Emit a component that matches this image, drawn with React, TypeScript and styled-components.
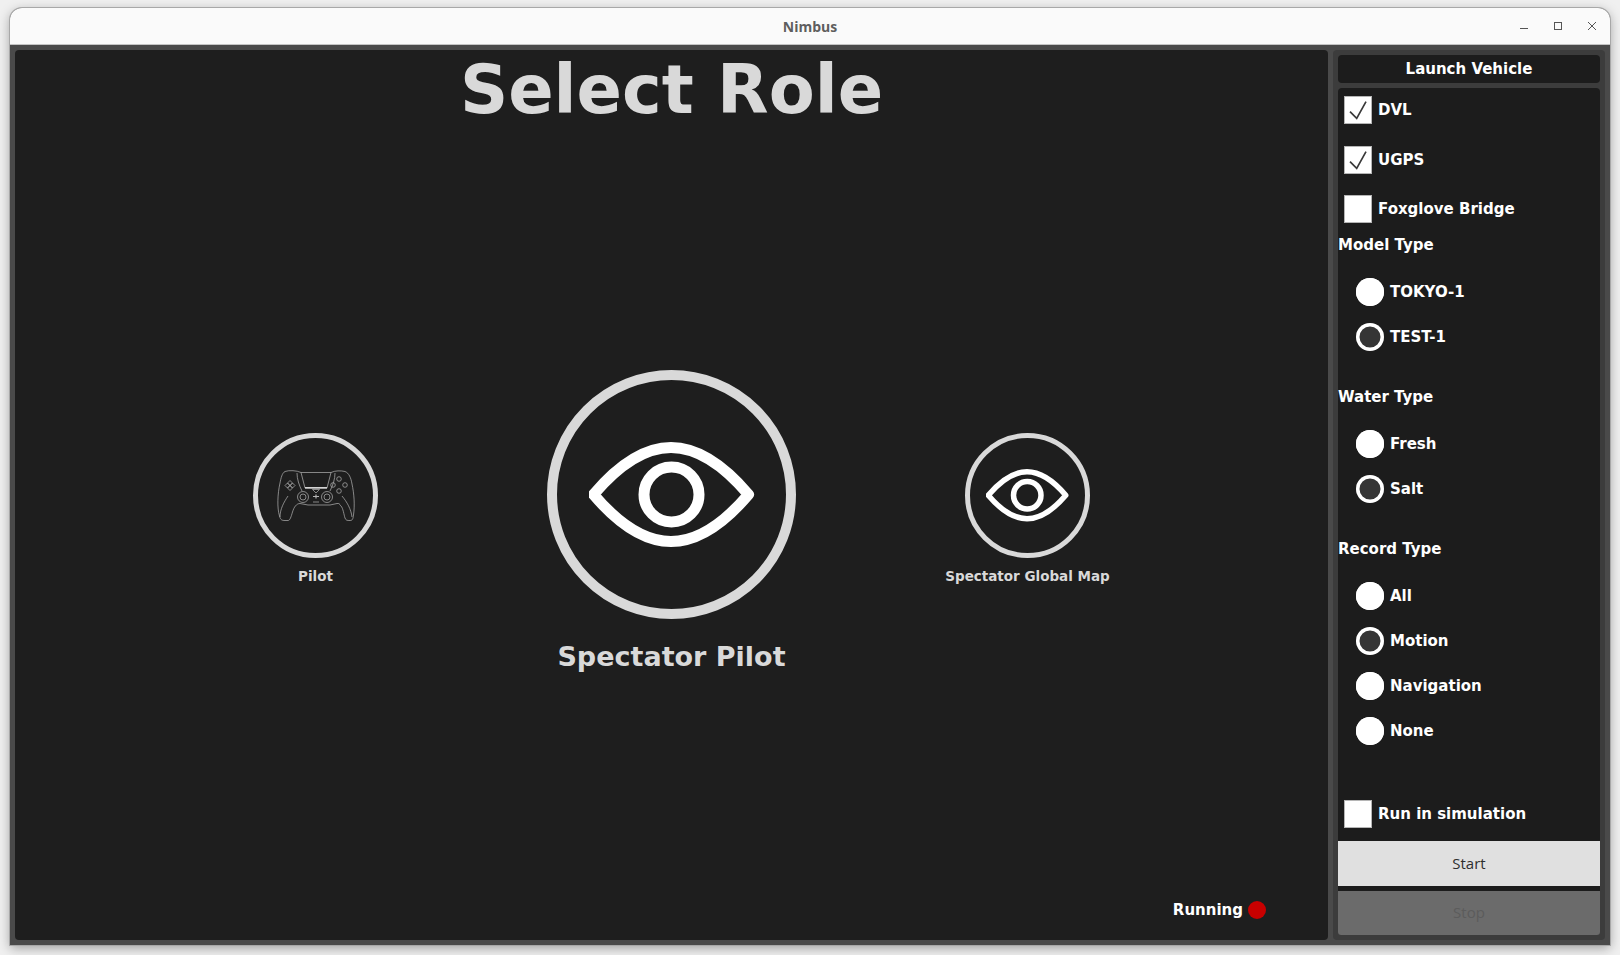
import styled, { createGlobalStyle } from "styled-components";

const GlobalStyle = createGlobalStyle`
  html, body {
    margin: 0;
    padding: 0;
    background: #ededed;
  }
  * {
    box-sizing: border-box;
  }
`;

const Desktop = styled.div`
  width: 1620px;
  height: 955px;
  padding: 8px 10px 10px;
  background: #f0f0f0;
  overflow: hidden;
`;

const Window = styled.div`
  height: 937px;
  display: flex;
  flex-direction: column;
  border-radius: 12px 12px 0 0;
  overflow: hidden;
  background: #4a4a4a;
  box-shadow: 0 0 0 1px #a8a8a8, 0 3px 12px rgba(0, 0, 0, 0.35);
`;

const TitleBar = styled.header`
  position: relative;
  height: 37px;
  flex: none;
  display: flex;
  align-items: center;
  justify-content: center;
  background: #fafafa;
  border-bottom: 1px solid #c4c4c4;
  color: #5e5e5e;
  font: 700 14px "Open Sans", "Noto Sans", sans-serif;
`;

const WindowButtons = styled.div`
  position: absolute;
  top: 0;
  right: 1px;
  height: 36px;
  display: flex;
  align-items: center;
  color: #555;
`;

const WindowButton = styled.span`
  width: 34px;
  height: 36px;
  display: flex;
  align-items: center;
  justify-content: center;
`;

const Body = styled.div`
  flex: 1;
  min-height: 0;
  display: flex;
  gap: 5px;
  padding: 5px;
`;

const MainPanel = styled.main`
  width: 1313px;
  flex: none;
  display: flex;
  flex-direction: column;
  background: #1e1e1e;
  border-radius: 4px;
  color: #d9d9d9;
  font-family: "DejaVu Sans", sans-serif;
`;

const Heading = styled.h1`
  margin: 0;
  height: 80px;
  line-height: 80px;
  text-align: center;
  font-size: 67px;
  font-weight: 700;
`;

const Roles = styled.div`
  flex: 1;
  display: flex;
  justify-content: center;
  padding-top: 240px;
`;

const RoleColumn = styled.div<{ $big?: boolean }>`
  width: 356px;
  display: flex;
  flex-direction: column;
  align-items: center;
  margin-top: ${(p) => (p.$big ? 0 : 63)}px;
`;

const RoleCircle = styled.div<{ $big?: boolean }>`
  width: ${(p) => (p.$big ? 249 : 125)}px;
  height: ${(p) => (p.$big ? 249 : 125)}px;
  flex: none;
  display: flex;
  align-items: center;
  justify-content: center;
  border: ${(p) => (p.$big ? 10 : 5)}px solid #d9d9d9;
  border-radius: 50%;
`;

const RoleLabel = styled.div<{ $big?: boolean }>`
  margin-top: ${(p) => (p.$big ? 21 : 9)}px;
  font-size: ${(p) => (p.$big ? 27 : 13.5)}px;
  line-height: ${(p) => (p.$big ? 34 : 19)}px;
  font-weight: 700;
  white-space: nowrap;
`;

const StatusRow = styled.div`
  height: 40px;
  margin-bottom: 10px;
  padding-right: 62px;
  display: flex;
  align-items: center;
  justify-content: flex-end;
  gap: 5px;
  color: #fff;
  font-size: 15px;
  font-weight: 700;
`;

const StatusDot = styled.span`
  width: 18px;
  height: 18px;
  border-radius: 50%;
  background: #c80000;
`;

const SidePanel = styled.aside`
  flex: 1;
  display: flex;
  flex-direction: column;
  gap: 5px;
  padding: 5px;
  background: #3c3c3c;
  border-radius: 4px;
  color: #fff;
  font-family: "DejaVu Sans", sans-serif;
  font-size: 15px;
  font-weight: 700;
`;

const PanelHeader = styled.div`
  height: 28px;
  flex: none;
  display: flex;
  align-items: center;
  justify-content: center;
  background: #1c1c1c;
  border-radius: 4px;
`;

const Controls = styled.div`
  flex: 1;
  display: flex;
  flex-direction: column;
  background: #1c1c1c;
  border-radius: 4px;
`;

const Options = styled.div`
  flex: 1;
  display: flex;
  flex-direction: column;
`;

const CheckList = styled.div`
  display: flex;
  flex-direction: column;
  gap: 5.5px;
  margin-bottom: 2px;
`;

const CheckRow = styled.label`
  height: 44px;
  display: flex;
  align-items: center;
  gap: 6px;
  padding-left: 6px;
`;

const CheckBox = styled.span`
  width: 28px;
  height: 28px;
  flex: none;
  background: #fff;
  border: 1px solid #b5b5b5;
`;

const GroupTitle = styled.div`
  height: 24px;
  line-height: 24px;
`;

const RadioGroup = styled.section<{ $gap: number }>`
  margin-bottom: ${(p) => p.$gap}px;
`;

const RadioList = styled.div`
  padding-top: 12px;
`;

const RadioRow = styled.label`
  height: 45px;
  display: flex;
  align-items: center;
  gap: 6px;
  padding-left: 18px;
`;

const RadioMark = styled.span<{ $checked?: boolean }>`
  width: 28px;
  height: 28px;
  flex: none;
  border-radius: 50%;
  background: ${(p) => (p.$checked ? "#353535" : "#fff")};
  box-shadow: inset 0 0 0 3.5px #fff;
`;

const ActionButton = styled.button<{ $disabled?: boolean }>`
  height: 45px;
  flex: none;
  border: 0;
  padding: 0 0 2px;
  background: ${(p) => (p.$disabled ? "#6b6b6b" : "#e0e0e0")};
  color: ${(p) => (p.$disabled ? "#5c5c5c" : "#2e2e2e")};
  font: 400 15px "Open Sans", "Noto Sans", sans-serif;
`;

const StopButton = styled(ActionButton)`
  height: 44px;
  margin-top: 5px;
  border-radius: 0 0 3px 3px;
`;

const EyeIcon = ({ width }: { width: number }) => (
  <svg width={width} height={(width * 105) / 166} viewBox="0 0 166 105" fill="none">
    <path
      d="M4.5 52.5C27 26 54 5.5 82 5.5S137 26 159.500 52.5C137 79 110 99.500 82 99.5S27 79 4.5 52.5Z"
      stroke="#fff"
      strokeWidth="11"
      strokeLinejoin="round"
    />
    <circle cx="82.500" cy="52.5" r="27.5" stroke="#fff" strokeWidth="11" />
  </svg>
);

const ControllerIcon = () => (
  <svg width="88" height="62" viewBox="0 0 88 62" fill="none" stroke="#b5b5b5" strokeWidth="0.7">
    <path d="M13 6.5C10 8 9 13 8 18C5.5 29 5 43 7.5 51C8.5 55 10 55.5 13 55.5H16C18 55.5 19 52 20.5 47C22 42 24.5 38.5 28 38.5L36 40H58L65 38.5C69 38.5 66 38.5 69 41C71 43 72 50 73 53C74 55.5 75 55.5 78 55.5C80.5 55.5 81 54 81.5 50C83 40 82 28 80 19C79 13 77 8 73 6.5C69 5.500 63 5.5 59 7.5H29C25 5.5 17 5 13 6.5Z" />
    <path d="M29 7.5L33 23H55L59 7.5" />
    <path d="M33 22.8H55" stroke="#dcdcdc" strokeWidth="1.5" />
    <path d="M25 8C25 14 27 20 30 26M63 8C63 14 61 20 58 26" />
    <path d="M16 31C12 37 8 44 8 52M70 31C75 37 79 44 80 52" />
    <circle cx="31" cy="32" r="5.5" />
    <circle cx="31" cy="32" r="3" />
    <circle cx="55" cy="32" r="5.500" />
    <circle cx="55" cy="32" r="3" />
    <path d="M18 15.5l2.5 2.5-2.5 2.5-2.5-2.5ZM18 20.5l2.5 2.5-2.5 2.5-2.5-2.5ZM15.5 18l-2.5 2.5 2.5 2.5 2.5-2.5ZM20.5 18l2.5 2.5-2.5 2.5-2.5-2.5Z" />
    <circle cx="67" cy="14" r="2.3" />
    <circle cx="67" cy="26" r="2.3" />
    <circle cx="61" cy="20" r="2.3" />
    <circle cx="73" cy="20" r="2.3" />
    <path d="M41 31.5h6M44 29.5v4" strokeWidth="1.2" />
    <path d="M40.5 24.5l3.5 3.5 3.5-3.5Z" />
    <path d="M41 37h6" />
  </svg>
);

const CheckMark = () => (
  <svg width="26" height="26" viewBox="0 0 26 26" fill="none">
    <path d="M5 14.7L11.7 21.3L21 4.7" stroke="#3a3a3a" strokeWidth="1.7" />
  </svg>
);

type RadioGroupData = {
  title: string;
  options: string[];
  selected: string;
  gap: number;
};

const radioGroups: RadioGroupData[] = [
  { title: "Model Type", options: ["TOKYO-1", "TEST-1"], selected: "TEST-1", gap: 26 },
  { title: "Water Type", options: ["Fresh", "Salt"], selected: "Salt", gap: 26 },
  { title: "Record Type", options: ["All", "Motion", "Navigation", "None"], selected: "Motion", gap: 39 },
];

const App = () => {
  return (
    <>
      <GlobalStyle />
      <Desktop>
        <Window>
          <TitleBar>
            Nimbus
            <WindowButtons>
              <WindowButton>
                <svg width="12" height="12" viewBox="0 0 12 12" fill="none">
                  <path d="M2 8.5H10" stroke="#555" strokeWidth="1" />
                </svg>
              </WindowButton>
              <WindowButton>
                <svg width="12" height="12" viewBox="0 0 12 12" fill="none">
                  <rect x="2.5" y="2.5" width="7" height="7" stroke="#555" strokeWidth="1" />
                </svg>
              </WindowButton>
              <WindowButton>
                <svg width="12" height="12" viewBox="0 0 12 12" fill="none">
                  <path d="M2 2L10 10M10 2L2 10" stroke="#555" strokeWidth="1" />
                </svg>
              </WindowButton>
            </WindowButtons>
          </TitleBar>
          <Body>
            <MainPanel>
              <Heading>Select Role</Heading>
              <Roles>
                <RoleColumn>
                  <RoleCircle>
                    <ControllerIcon />
                  </RoleCircle>
                  <RoleLabel>Pilot</RoleLabel>
                </RoleColumn>
                <RoleColumn $big>
                  <RoleCircle $big>
                    <EyeIcon width={166} />
                  </RoleCircle>
                  <RoleLabel $big>Spectator Pilot</RoleLabel>
                </RoleColumn>
                <RoleColumn>
                  <RoleCircle>
                    <EyeIcon width={83} />
                  </RoleCircle>
                  <RoleLabel>Spectator Global Map</RoleLabel>
                </RoleColumn>
              </Roles>
              <StatusRow>
                Running
                <StatusDot />
              </StatusRow>
            </MainPanel>
            <SidePanel>
              <PanelHeader>Launch Vehicle</PanelHeader>
              <Controls>
                <Options>
                  <CheckList>
                    <CheckRow>
                      <CheckBox>
                        <CheckMark />
                      </CheckBox>
                      DVL
                    </CheckRow>
                    <CheckRow>
                      <CheckBox>
                        <CheckMark />
                      </CheckBox>
                      UGPS
                    </CheckRow>
                    <CheckRow>
                      <CheckBox />
                      Foxglove Bridge
                    </CheckRow>
                  </CheckList>
                  {radioGroups.map((group) => (
                    <RadioGroup key={group.title} $gap={group.gap}>
                      <GroupTitle>{group.title}</GroupTitle>
                      <RadioList>
                        {group.options.map((option) => (
                          <RadioRow key={option}>
                            <RadioMark $checked={option === group.selected} />
                            {option}
                          </RadioRow>
                        ))}
                      </RadioList>
                    </RadioGroup>
                  ))}
                  <CheckRow>
                    <CheckBox />
                    Run in simulation
                  </CheckRow>
                </Options>
                <ActionButton>Start</ActionButton>
                <StopButton $disabled>Stop</StopButton>
              </Controls>
            </SidePanel>
          </Body>
        </Window>
      </Desktop>
    </>
  );
};

export default App;
